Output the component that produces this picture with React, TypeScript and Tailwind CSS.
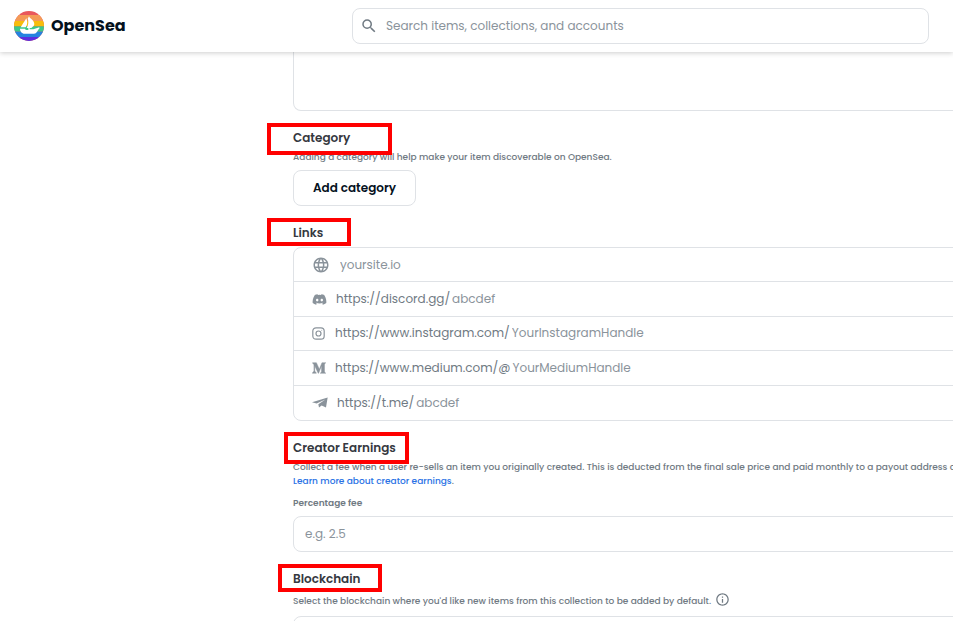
import { useState } from 'react';
import type { ReactNode } from 'react';
import { FaDiscord, FaMediumM } from 'react-icons/fa';
import { MdInfoOutline, MdLanguage, MdSearch } from 'react-icons/md';

function Logo() {
  return (
    <svg className="h-[30px] w-[30px]" viewBox="0 0 90 90" aria-hidden="true">
      <clipPath id="logo-clip">
        <circle cx="45" cy="45" r="45" />
      </clipPath>
      <g clipPath="url(#logo-clip)">
        <rect width="90" height="90" fill="#e9585c" />
        <rect y="12" width="90" height="18" fill="#f49a56" />
        <rect y="30" width="90" height="16" fill="#f8bd0c" />
        <rect y="46" width="90" height="16" fill="#3cc98a" />
        <rect y="62" width="90" height="16" fill="#2483e0" />
        <rect y="78" width="90" height="12" fill="#5b2fe0" />
      </g>
      <path d="M37 22 C41 32 41 40 35 49 L20 49 Z" fill="#fff" />
      <path d="M43 17 L47 17 L47 20 C57 26 64 37 60 43 C58 47 54 49 52 51 L47 51 L47 55 L58 55 L76 49 L76 53 C70 57 69 68 60 68 L32 68 C23 68 18 60 18 53 L33 53 C34 56 36 57 40 57 L43 57 L43 51 L38 51 C44 42 44 31 41 22 L43 21 Z" fill="#fff" />
    </svg>
  );
}

function InstagramIcon() {
  return (
    <svg className="h-[13px] w-[13px]" viewBox="0 0 24 24" fill="none" stroke="currentColor" strokeWidth={2.2}>
      <rect x="1.5" y="1.5" width="21" height="21" rx="6" />
      <circle cx="12" cy="12" r="4.6" />
      <circle cx="18" cy="6" r="0.4" strokeWidth={1} />
    </svg>
  );
}

function TelegramIcon() {
  return (
    <svg className="h-[11px] w-4" viewBox="0 0 48 32" fill="currentColor">
      <path d="M0 15 L47 1 L42 31 L29 25 L21 31 L19 21 L40 7 L14 19 Z" />
    </svg>
  );
}

interface SectionTitleProps {
  children: ReactNode;
  markClass: string;
}

function SectionTitle({ children, markClass }: SectionTitleProps) {
  return (
    <h2 className="relative text-[12px] leading-5 font-semibold text-[#353840]">
      {children}
      <span className={`pointer-events-none absolute border-4 border-[#ff0000] ${markClass}`} />
    </h2>
  );
}

const links = [
  { name: 'Website', prefix: '', placeholder: 'yoursite.io', icon: <MdLanguage className="h-[18px] w-[18px]" />, gap: 'gap-[10px]' },
  { name: 'Discord', prefix: 'https://discord.gg/', placeholder: 'abcdef', icon: <FaDiscord className="h-[15px] w-[15px]" />, gap: 'gap-[9px]' },
  { name: 'Instagram', prefix: 'https://www.instagram.com/', placeholder: 'YourInstagramHandle', icon: <InstagramIcon />, gap: 'gap-[10px]' },
  { name: 'Medium', prefix: 'https://www.medium.com/@', placeholder: 'YourMediumHandle', icon: <FaMediumM className="h-[14px] w-[14px]" strokeWidth={18} />, gap: 'gap-[9px]' },
  { name: 'Telegram', prefix: 'https://t.me/', placeholder: 'abcdef', icon: <TelegramIcon />, gap: 'gap-[9px]' },
];

export default function App() {
  const [search, setSearch] = useState('');
  const [fee, setFee] = useState('');

  return (
    <div className="bg-white font-['Poppins',Inter,sans-serif] text-[12px] text-[#707a83]">
      <header className="sticky top-0 z-10 flex h-[52px] items-center bg-white pr-6 pl-[14px] shadow-[0_1px_5px_rgba(0,0,0,0.2)]">
        <a href="#" className="flex w-[338px] shrink-0 items-center gap-[7px]">
          <Logo />
          <span className="text-[16px] leading-6 font-bold text-[#04111d]">OpenSea</span>
        </a>
        <label className="flex h-9 flex-1 items-center gap-2 rounded-lg border border-[#dfe2e6] px-[7px]">
          <MdSearch className="h-[18px] w-[18px] shrink-0 text-[#707a83]" />
          <input
            type="text"
            aria-label="Search"
            value={search}
            onChange={(e) => setSearch(e.target.value)}
            placeholder="Search items, collections, and accounts"
            className="w-full outline-none placeholder:text-[#8a939b]"
          />
        </label>
      </header>

      <main className="overflow-hidden pl-[293px]">
        <form className="-mr-6" onSubmit={(e) => e.preventDefault()}>
          <textarea
            aria-label="Description"
            className="block h-[59px] w-full resize-none rounded-b-lg border border-t-0 border-[#dfe2e6] px-3 outline-none"
          />

          <section className="pt-[17px]">
            <SectionTitle markClass="-top-[5px] -left-[26px] h-8 w-[125px]">Category</SectionTitle>
            <p className="mt-[2px] text-[9px] leading-[14px] font-medium">
              Adding a category will help make your item discoverable on OpenSea.
            </p>
            <button
              type="button"
              className="mt-[6px] h-9 rounded-lg border border-[#dfe2e6] px-[19px] font-semibold text-[#04111d]"
            >
              Add category
            </button>
          </section>

          <section className="pt-[17px]">
            <SectionTitle markClass="-top-[5px] -left-[26px] h-7 w-[84px]">Links</SectionTitle>
            <ul className="mt-1 grid h-[174px] grid-rows-5 divide-y divide-[#dfe2e6] rounded-lg border border-[#dfe2e6]">
              {links.map((link) => (
                <li key={link.name}>
                  <label className={`flex h-full items-center pl-[18px] text-[#8a939b] ${link.gap}`}>
                    {link.icon}
                    <span className="flex flex-1 items-center gap-[2px]">
                      {link.prefix && <span className="text-[#707a83]">{link.prefix}</span>}
                      <input
                        type="text"
                        aria-label={link.name}
                        placeholder={link.placeholder}
                        className="min-w-0 flex-1 outline-none placeholder:text-[#8a939b]"
                      />
                    </span>
                  </label>
                </li>
              ))}
            </ul>
          </section>

          <section className="pt-[17px]">
            <SectionTitle markClass="-top-[6px] -left-[9px] h-8 w-[125px]">Creator Earnings</SectionTitle>
            <p className="mt-[2px] text-[9px] leading-[14px] font-medium whitespace-nowrap">
              Collect a fee when a user re-sells an item you originally created. This is deducted from the final sale price and paid monthly to a payout address of your choosing.
              <br />
              <a href="#" className="text-[#2a72e5]">Learn more about creator earnings</a>.
            </p>
            <label htmlFor="fee" className="mt-2 block text-[9px] leading-[14px] font-semibold">
              Percentage fee
            </label>
            <input
              id="fee"
              type="text"
              value={fee}
              onChange={(e) => setFee(e.target.value)}
              placeholder="e.g. 2.5"
              className="mt-[6px] block h-9 w-full rounded-lg border border-[#dfe2e6] px-[11px] outline-none placeholder:text-[#8a939b]"
            />
          </section>

          <section className="pt-[17px]">
            <SectionTitle markClass="-top-[5px] -left-[15px] h-7 w-[104px]">Blockchain</SectionTitle>
            <p className="mt-[5px] flex items-center gap-1 text-[9px] leading-[14px] font-medium">
              Select the blockchain where you'd like new items from this collection to be added by default.
              <MdInfoOutline className="-mt-1 h-[15px] w-[15px]" />
            </p>
            <select
              aria-label="Blockchain"
              className="mt-2 block h-9 w-full appearance-none rounded-lg border border-[#dfe2e6] px-[11px]"
            />
          </section>
        </form>
      </main>
    </div>
  );
}
